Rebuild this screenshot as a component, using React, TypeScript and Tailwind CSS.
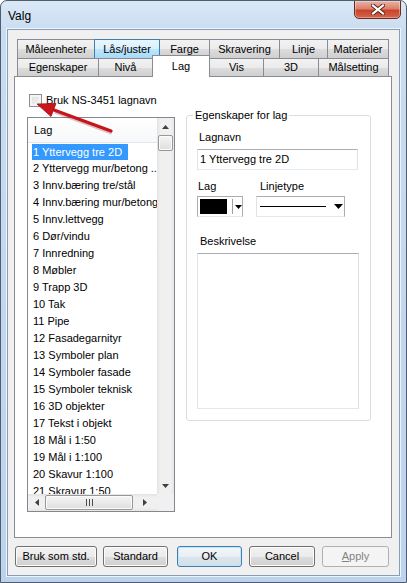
import React from 'react';

type TabDef = { label: string; w: string; hover?: boolean; selected?: boolean };

const rowOne: TabDef[] = [
  { label: 'Måleenheter', w: 'w-[78px]' },
  { label: 'Lås/juster', w: 'w-[66px]', hover: true },
  { label: 'Farge', w: 'w-[51px]' },
  { label: 'Skravering', w: 'w-[71px]' },
  { label: 'Linje', w: 'w-[49px]' },
  { label: 'Materialer', w: 'w-[62px]' },
];

const rowTwo: TabDef[] = [
  { label: 'Egenskaper', w: 'w-[82px]' },
  { label: 'Nivå', w: 'w-[55px]' },
  { label: 'Lag', w: 'w-[58px]', selected: true },
  { label: 'Vis', w: 'w-[55px]' },
  { label: '3D', w: 'w-[56px]' },
  { label: 'Målsetting', w: 'w-[71px]' },
];

const layers = [
  '1 Yttervegg tre 2D',
  '2 Yttervegg mur/betong ..',
  '3 Innv.bæring tre/stål',
  '4 Innv.bæring mur/betong',
  '5 Innv.lettvegg',
  '6 Dør/vindu',
  '7 Innredning',
  '8 Møbler',
  '9 Trapp 3D',
  '10 Tak',
  '11 Pipe',
  '12 Fasadegarnityr',
  '13 Symboler plan',
  '14 Symboler fasade',
  '15 Symboler teknisk',
  '16 3D objekter',
  '17 Tekst i objekt',
  '18 Mål i 1:50',
  '19 Mål i 1:100',
  '20 Skavur 1:100',
  '21 Skravur 1:50',
];

const Tab = ({ tab, first, h }: { tab: TabDef; first: boolean; h: string }) => {
  if (tab.selected) {
    return (
      <div
        className={`${tab.w} ${first ? '' : '-ml-px'} relative z-10 -mt-[3px] h-[22px] border border-b-0 border-[#898c95] bg-white flex justify-center pt-[2px]`}
      >
        {tab.label}
      </div>
    );
  }
  const look = tab.hover
    ? 'border-[#3c7fb1] bg-[linear-gradient(to_bottom,#eaf6fd_0%,#d9f0fc_50%,#bee6fd_51%,#a7d9f5_100%)]'
    : 'border-[#898c95] bg-[linear-gradient(to_bottom,#f2f2f2_0%,#ebebeb_50%,#dddddd_51%,#cfcfcf_100%)]';
  return (
    <div
      className={`${tab.w} ${h} ${first ? '' : '-ml-px'} ${tab.hover ? 'relative z-[1]' : ''} border border-b-0 ${look} flex items-center justify-center`}
    >
      {tab.label}
    </div>
  );
};

const UpArrow = () => (
  <svg width="7" height="4" viewBox="0 0 7 4">
    <path d="M0 4 L3.5 0 L7 4 Z" fill="#404040" />
  </svg>
);
const DownArrow = ({ color = '#404040' }: { color?: string }) => (
  <svg width="7" height="4" viewBox="0 0 7 4">
    <path d="M0 0 L7 0 L3.5 4 Z" fill={color} />
  </svg>
);
const LeftArrow = () => (
  <svg width="4" height="7" viewBox="0 0 4 7">
    <path d="M4 0 L4 7 L0 3.5 Z" fill="#404040" />
  </svg>
);
const RightArrow = () => (
  <svg width="4" height="7" viewBox="0 0 4 7">
    <path d="M0 0 L0 7 L4 3.5 Z" fill="#404040" />
  </svg>
);

const thumb =
  'rounded-[2px] border border-[#979797] bg-[linear-gradient(to_bottom,#f5f5f5,#dedede)] shadow-[inset_0_0_0_1px_#fbfbfb]';

const LayerList = () => (
  <div className="w-[148px] h-[395px] border border-[#828790] bg-white flex flex-col">
    <div className="flex h-[376px]">
      <div className="w-[129px] flex flex-col overflow-hidden">
        <div className="h-[25px] shrink-0 flex items-center pl-[6px] border-b border-[#e3e6ea] bg-[linear-gradient(to_bottom,#ffffff,#f7f8f9)]">
          Lag
        </div>
        <div className="flex-1 overflow-hidden">
          {layers.map((name, i) => (
            <div key={name} className="h-[17px] flex items-center pl-[4px] whitespace-nowrap">
              {i === 0 ? (
                <span className="bg-[#3399ff] text-white pl-[1px] pr-[6px] leading-[16px]">{name}</span>
              ) : (
                <span className="pl-[1px]">{name}</span>
              )}
            </div>
          ))}
        </div>
      </div>
      <div className="w-[17px] flex flex-col bg-[linear-gradient(to_right,#e3e3e3,#f0f0f0_20%,#f0f0f0_80%,#e6e6e6)]">
        <div className="h-[17px] flex items-center justify-center">
          <UpArrow />
        </div>
        <div className={`mx-px h-[16px] ${thumb}`} />
        <div className="flex-1" />
        <div className="h-[17px] flex items-center justify-center">
          <DownArrow />
        </div>
      </div>
    </div>
    <div className="flex h-[17px]">
      <div className="w-[129px] flex items-center bg-[linear-gradient(to_bottom,#e3e3e3,#f0f0f0_20%,#f0f0f0_80%,#e6e6e6)]">
        <div className="w-[17px] flex justify-center">
          <LeftArrow />
        </div>
        <div className={`w-[88px] h-[15px] ${thumb} flex items-center justify-center gap-[2px]`}>
          <span className="w-px h-[7px] bg-[#4d4d4d]" />
          <span className="w-px h-[7px] bg-[#4d4d4d]" />
          <span className="w-px h-[7px] bg-[#4d4d4d]" />
        </div>
        <div className="flex-1 flex justify-center">
          <RightArrow />
        </div>
      </div>
      <div className="w-[17px] bg-[#f0f0f0]" />
    </div>
  </div>
);

const LayerProps = () => (
  <div className="relative mt-[38px] w-[185px] h-[306px] border border-[#d5dfe5] rounded-[3px] pl-[10px]">
    <span className="absolute -top-[7px] left-[6px] bg-white px-[2px] leading-[13px]">Egenskaper for lag</span>
    <div className="mt-[15px] pl-[2px] leading-[13px]">Lagnavn</div>
    <div className="mt-[5px] w-[161px] h-[21px] border border-[#abadb3] border-l-[#e2e3ea] border-r-[#dbdfe6] border-b-[#e3e9ef] flex items-center pl-[2px]">
      1 Yttervegg tre 2D
    </div>
    <div className="mt-[10px] flex leading-[13px]">
      <span className="w-[63px] pl-px">Lag</span>
      <span>Linjetype</span>
    </div>
    <div className="mt-[3px] flex">
      <div className="w-[46px] h-[21px] border border-[#abadb3] border-b-[#e3e9ef] bg-white flex items-center pl-[2px]">
        <div className="w-[29px] h-[15px] bg-black" />
        <div className="ml-[5px] w-px h-[15px] bg-[#a0a0a0]" />
        <div className="ml-[2px]">
          <DownArrow color="#000" />
        </div>
      </div>
      <div className="ml-[13px] w-[89px] h-[21px] border border-[#abadb3] border-l-[#e2e3ea] border-b-[#e3e9ef] bg-white flex items-center pl-[3px]">
        <div className="w-[66px] h-px bg-black" />
        <div className="ml-[8px]">
          <svg width="9" height="5" viewBox="0 0 9 5">
            <path d="M0 0 L9 0 L4.5 5 Z" fill="#000" />
          </svg>
        </div>
      </div>
    </div>
    <div className="mt-[18px] pl-[3px] leading-[13px]">Beskrivelse</div>
    <div className="mt-[5px] w-[162px] h-[156px] border border-[#abadb3] border-l-[#e2e3ea] border-r-[#dbdfe6] border-b-[#e3e9ef] bg-white" />
  </div>
);

const btnBase = 'h-[21px] rounded-[3px] border flex items-center justify-center';
const btnNormal =
  'border-[#707070] bg-[linear-gradient(to_bottom,#f2f2f2_0%,#ebebeb_50%,#dddddd_51%,#cfcfcf_100%)] shadow-[inset_0_0_0_1px_#fcfcfc]';

export default function App() {
  return (
    <div className="relative w-[407px] h-[583px] font-['Liberation_Sans','DejaVu_Sans',sans-serif] text-[11px] text-black bg-white">
      <div className="w-full h-full rounded-t-[7px] border border-[#4f5d6d] bg-[linear-gradient(to_bottom,#dbe8f6_0px,#c9dcf1_30px,#bcd3ee_100%)] flex flex-col overflow-hidden">
        <div className="relative h-[28px] shrink-0 flex items-center pl-[7px] text-[12px] pt-[2px]">
          Valg
          <div className="absolute top-[-1px] right-[5px] w-[47px] h-[19px] rounded-b-[5px] border border-[#6b2a20] bg-[linear-gradient(to_bottom,#eab3a7_0%,#dc806b_45%,#c8452b_55%,#d5654b_100%)] shadow-[inset_0_0_0_1px_rgba(255,255,255,0.35)] flex items-center justify-center">
            <svg width="14" height="11" viewBox="0 0 14 11">
              <path d="M2 1.5 L12 9.5 M12 1.5 L2 9.5" stroke="#5a2016" strokeWidth="4" strokeLinecap="square" />
              <path d="M2 1.5 L12 9.5 M12 1.5 L2 9.5" stroke="#ffffff" strokeWidth="2.2" strokeLinecap="square" />
            </svg>
          </div>
        </div>
        <div className="mx-[6px] mb-[6px] flex-1 border border-[#8a9db5] shadow-[0_0_0_1px_#eef4fb] bg-[#f0f0f0] pl-[6px] pt-[9px] flex flex-col">
          <div className="w-[378px]">
            <div className="flex pl-[3px]">
              {rowOne.map((t, i) => (
                <Tab key={t.label} tab={t} first={i === 0} h="h-[19px]" />
              ))}
            </div>
            <div className="flex pl-[3px] h-[18px]">
              {rowTwo.map((t, i) => (
                <Tab key={t.label} tab={t} first={i === 0} h="h-[18px]" />
              ))}
            </div>
            <div className="h-[462px] border border-[#898c95] bg-white flex pl-[12px]">
              <div className="w-[148px] pt-[17px]">
                <div className="flex items-center h-[13px] pl-[2px]">
                  <div className="w-[13px] h-[13px] border border-[#8e8f8f] bg-[linear-gradient(135deg,#dcdcdc,#f8f8f8)] shadow-[inset_0_0_0_2px_#f4f4f4]" />
                  <span className="ml-[4px]">Bruk NS-3451 lagnavn</span>
                </div>
                <div className="mt-[10px]">
                  <LayerList />
                </div>
              </div>
              <div className="ml-[11px]">
                <LayerProps />
              </div>
            </div>
          </div>
          <div className="mt-[8px] flex">
            <div className={`ml-px w-[82px] ${btnBase} ${btnNormal}`}>Bruk som std.</div>
            <div className={`ml-[6px] w-[65px] ${btnBase} ${btnNormal}`}>Standard</div>
            <div
              className={`ml-[9px] w-[65px] ${btnBase} border-[#3c7fb1] bg-[linear-gradient(to_bottom,#f2f6f9_0%,#e9eff4_50%,#dbe5ed_51%,#d3dee8_100%)] shadow-[inset_0_0_0_1px_#c4e5f8]`}
            >
              OK
            </div>
            <div className={`ml-[7px] w-[66px] ${btnBase} ${btnNormal}`}>Cancel</div>
            <div className={`ml-[7px] w-[67px] ${btnBase} border-[#adb2b5] bg-[#f4f4f4] text-[#838383]`}>
              <span>
                <span className="underline">A</span>pply
              </span>
            </div>
          </div>
        </div>
      </div>
      <svg className="absolute left-0 top-0 pointer-events-none" width="407" height="583" viewBox="0 0 407 583">
        <path d="M111 131 L54 110" stroke="#7a0c10" strokeOpacity="0.25" strokeWidth="4.5" transform="translate(1 1.5)" />
        <path d="M111 131 L54 110" stroke="#c8141b" strokeWidth="3.2" strokeLinecap="round" />
        <path d="M37 104 L56 103.5 L51 116.5 Z" fill="#c8141b" stroke="#b01016" strokeWidth="0.8" strokeLinejoin="round" />
      </svg>
    </div>
  );
}
